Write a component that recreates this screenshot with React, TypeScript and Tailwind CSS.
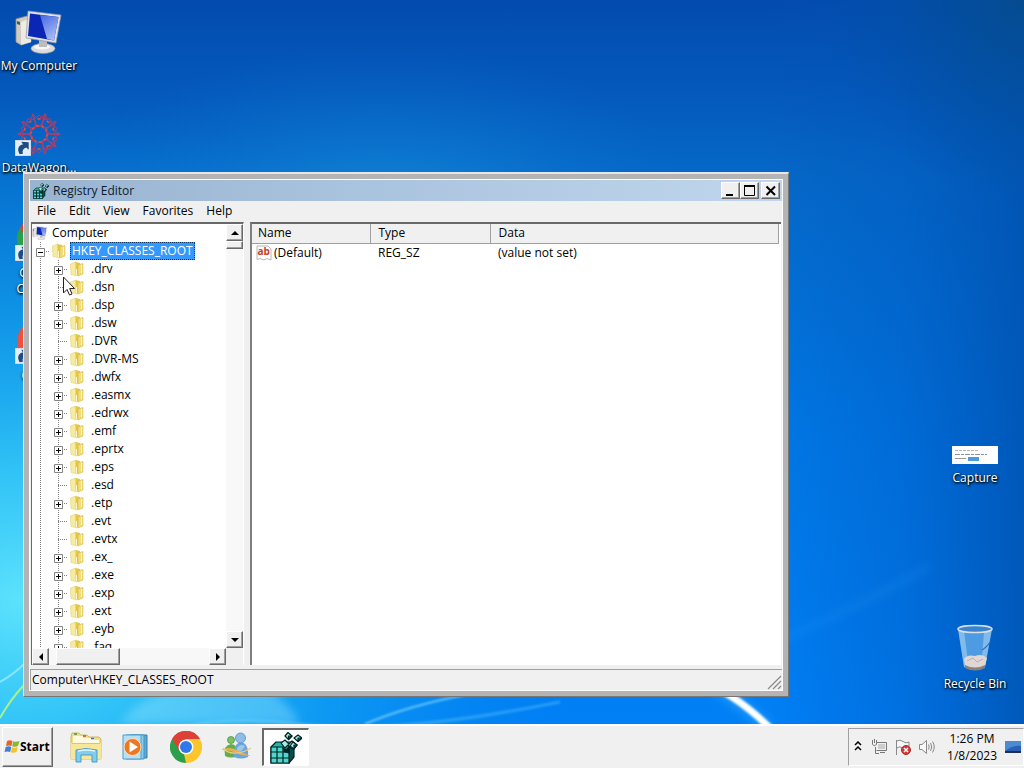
import type { ReactNode } from "react";

type Key = {
    name: string;
    open?: boolean; // has sub keys
}

const keys: Key[] = [
    { name: ".drv", open: true },
    { name: ".dsn" },
    { name: ".dsp", open: true },
    { name: ".dsw", open: true },
    { name: ".DVR" },
    { name: ".DVR-MS", open: true },
    { name: ".dwfx", open: true },
    { name: ".easmx", open: true },
    { name: ".edrwx", open: true },
    { name: ".emf", open: true },
    { name: ".eprtx", open: true },
    { name: ".eps", open: true },
    { name: ".esd" },
    { name: ".etp", open: true },
    { name: ".evt" },
    { name: ".evtx" },
    { name: ".ex_", open: true },
    { name: ".exe", open: true },
    { name: ".exp", open: true },
    { name: ".ext", open: true },
    { name: ".eyb", open: true },
    { name: ".faq", open: true },
];

const raised = "bg-[#f0f0f0] border border-t-white border-l-white border-r-[#696969] border-b-[#696969] shadow-[inset_-1px_-1px_0_#a0a0a0]";

function Wallpaper() {
    return (
        <svg className="absolute inset-0 h-full w-full" viewBox="0 0 1024 724" preserveAspectRatio="none" aria-hidden="true">
            <defs>
                <linearGradient id="sky" x1="0" y1="0" x2="0" y2="1">
                    <stop offset="0" stopColor="#034bae" />
                    <stop offset=".12" stopColor="#0458bb" />
                    <stop offset=".24" stopColor="#0568c8" />
                    <stop offset=".6" stopColor="#0078e6" />
                    <stop offset="1" stopColor="#0080f6" />
                </linearGradient>
                <radialGradient id="glow" gradientUnits="userSpaceOnUse" cx="0" cy="0" r="1" gradientTransform="translate(380 230) scale(330 190)">
                    <stop offset="0" stopColor="#1a9ae0" stopOpacity=".75" />
                    <stop offset="1" stopColor="#0a70cc" stopOpacity="0" />
                </radialGradient>
                <radialGradient id="cyan" gradientUnits="userSpaceOnUse" cx="0" cy="0" r="1" gradientTransform="translate(20 600) scale(560 500)">
                    <stop offset="0" stopColor="#5ce2fc" />
                    <stop offset=".25" stopColor="#38ccf8" stopOpacity=".9" />
                    <stop offset=".6" stopColor="#18b0f0" stopOpacity=".5" />
                    <stop offset="1" stopColor="#0888e8" stopOpacity="0" />
                </radialGradient>
                <linearGradient id="shade" x1="0" y1="0" x2="1" y2="0">
                    <stop offset=".75" stopColor="#0050b4" stopOpacity="0" />
                    <stop offset=".88" stopColor="#0054ba" stopOpacity=".35" />
                    <stop offset="1" stopColor="#0052b0" stopOpacity=".85" />
                </linearGradient>
                <radialGradient id="corner" gradientUnits="userSpaceOnUse" cx="1024" cy="0" r="200">
                    <stop offset="0" stopColor="#064a88" stopOpacity=".8" />
                    <stop offset="1" stopColor="#034c98" stopOpacity="0" />
                </radialGradient>
                <filter id="soft"><feGaussianBlur stdDeviation="1.2" /></filter>
                <filter id="wide" x="-50%" y="-50%" width="200%" height="200%"><feGaussianBlur stdDeviation="5" /></filter>
            </defs>
            <rect width="1024" height="724" fill="url(#sky)" />
            <rect width="1024" height="724" fill="url(#glow)" />
            <rect width="1024" height="724" fill="url(#cyan)" />
            <rect width="1024" height="724" fill="url(#shade)" />
            <rect width="1024" height="724" fill="url(#corner)" />
            <path d="M780 640 Q860 606 930 566" stroke="#2c9cf6" strokeWidth="6" opacity=".25" fill="none" filter="url(#wide)" />
            <path d="M650 655 Q725 685 768 728" stroke="#48b8ff" strokeWidth="12" opacity=".4" fill="none" filter="url(#wide)" />
            <path d="M690 675 Q735 693 770 728" stroke="#fff" strokeWidth="7" fill="none" filter="url(#soft)" />
            <path d="M130 740 Q210 712 300 724 T560 702" stroke="#7fdfff" strokeWidth="3" opacity=".3" fill="none" filter="url(#soft)" />
            <path d="M365 724 Q410 705 470 694" stroke="#a8ecff" strokeWidth="2" opacity=".6" fill="none" filter="url(#soft)" />
            <path d="M120 724 Q135 700 170 690 L270 690 Q295 710 300 724Z" fill="#a8f0ff" opacity=".35" filter="url(#wide)" />
            <path d="M0 718 Q10 700 24 685" stroke="#a5f28a" strokeWidth="2" fill="none" />
            <path d="M0 682 Q14 674 24 664" stroke="#b9f3ff" strokeWidth="2" opacity=".6" fill="none" />
        </svg>
    );
}

function DesktopIcon({ label, place, children }: { label: ReactNode; place: string; children: ReactNode }) {
    return (
        <button type="button" className={"absolute flex w-20 flex-col items-center gap-1 text-white [text-shadow:1px_1px_2px_#000,0_1px_3px_#000] " + place}>
            {children}
            <span className="whitespace-nowrap leading-4">{label}</span>
        </button>
    );
}

function ComputerIcon({ className }: { className: string }) {
    return (
        <svg className={className} viewBox="0 0 48 44" aria-hidden="true">
            <defs>
                <linearGradient id="screen" x1="0" y1="0" x2=".5" y2="1">
                    <stop offset="0" stopColor="#4468e0" />
                    <stop offset="1" stopColor="#a4b8f6" />
                </linearGradient>
            </defs>
            <path d="M1 9 L12 6 L16 8 V32 L6 35 L1 32Z" fill="#cfccc4" stroke="#8f8f8f" strokeWidth=".8" />
            <path d="M6 12 V35 L16 32 V8Z" fill="#eeebe4" />
            <path d="M2 11 L5 12 V15 L2 14Z" fill="#364" />
            <ellipse cx="28" cy="38.500" rx="12" ry="5" fill="#dcdcdc" stroke="#9a9a9a" strokeWidth=".7" />
            <ellipse cx="27" cy="37" rx="8" ry="2.500" fill="#f6f6f6" />
            <path d="M24 28 L32 29 L32 37 H24Z" fill="#bdbdbd" />
            <path d="M13 1 L46 5 L41 33 L11 28Z" fill="#e0e0e6" stroke="#8e96a8" strokeWidth=".7" />
            <path d="M15 3.500 L43.500 7 L39 30.500 L13 26Z" fill="#0b26b4" />
            <path d="M25 5 L43.500 7 L39 30.500 L32 29Z" fill="url(#screen)" />
        </svg>
    );
}

function ShortcutArrow({ className }: { className: string }) {
    return (
        <svg className={className} viewBox="0 0 14 14" aria-hidden="true">
            <path d="M0 0H14V14H0Z" fill="#e4eef8" stroke="#a8b8c8" strokeWidth=".6" />
            <path d="M4 12.500 C1.500 8 3 4.500 7 4 L5.500 1.500 L12 2 L12 8.500 L9.800 6.500 C7 7.500 6 9.500 7 12Z" fill="#1c4c86" />
        </svg>
    );
}

function WagonIcon() {
    const petals = [0, 36, 72, 108, 144, 180, 216, 252, 288, 324];
    return (
        <span className="relative block">
            <svg className="h-11 w-12" viewBox="-24 -22 48 44" aria-hidden="true">
                <g fill="none" stroke="#a83e6c" strokeWidth=".9">
                    {petals.map((a) => (
                        <g key={a} transform={`rotate(${a})`}>
                            <path d="M-7 -20 L0 -15 L7 -20 M-7 -20 L-4 -11 L0 -7 L4 -11 L7 -20" />
                            <path d="M-5 -14 L0 -19 L5 -14 M-3 -7 L3 -10" />
                            <path d="M-1.500 -15H1.500M-3 -8H0" stroke="#ea4a40" strokeWidth="1.500" />
                        </g>
                    ))}
                </g>
            </svg>
            <ShortcutArrow className="absolute bottom-0 left-0 h-4 w-4" />
        </span>
    );
}

function RecycleBin() {
    return (
        <svg className="h-12 w-10" viewBox="0 0 40 48" aria-hidden="true">
            <path d="M3 5 L9 43 Q20 49 30 43 L37 5Z" fill="#5ba6e8" opacity=".85" />
            <path d="M3 5 L9 43 L14 45 L9 7Z M37 5 L30 43 L26 45 L29 8Z" fill="#c6e1f6" opacity=".45" />
            <path d="M27 26 Q31 24 36 17" stroke="#2867b5" strokeWidth="1.200" fill="none" />
            <path d="M9 35 Q12 30 20 32 Q27 29 32 34 L30 42 Q20 47 10 42Z" fill="#ded7d5" />
            <path d="M12 37 L18 34 L22 38 L28 35" stroke="#bdb0ae" fill="none" />
            <path d="M10 41 Q20 46 30 41 L30 44 Q20 49 10 44Z" fill="#8e8078" />
            <ellipse cx="20" cy="5" rx="17" ry="3.500" fill="#3d83cc" stroke="#d9dfe4" strokeWidth="1.500" />
        </svg>
    );
}

function Folder() {
    return (
        <svg className="h-4 w-4 shrink-0" viewBox="0 0 16 16" aria-hidden="true">
            <path d="M1.500 3 L7 1 V14.500 L2 13.500Z" fill="#f6ebA0" stroke="#e0cf80" strokeWidth=".6" />
            <path d="M6.500 1 L11 2 V13 L7 15.500Z" fill="#e2c648" />
            <path d="M9 4 L14 2.500 V13 L9 15Z" fill="#f0dc78" stroke="#d8bd50" strokeWidth=".6" />
            <path d="M7.500 8 V14.500 M12.500 4V12" stroke="#fdf8d0" />
        </svg>
    );
}

/* one 18px step of the tree: dotted guide, with an optional branch */
function Guide({ branch = true }: { branch?: boolean }) {
    return (
        <svg className="block h-[18px] w-[18px] shrink-0" viewBox="0 0 18 18" aria-hidden="true">
            <path d="M8.500 0V18" stroke="#808080" strokeDasharray="1 1" />
            {branch && <path d="M8 9.500H18" stroke="#808080" strokeDasharray="1 1" />}
        </svg>
    );
}

function Toggle({ name, expanded }: { name: string; expanded?: boolean }) {
    return (
        <button type="button" aria-label={(expanded ? "Collapse " : "Expand ") + name} className="block h-[18px] w-[18px] shrink-0">
            <svg className="block h-[18px] w-[18px]" viewBox="0 0 18 18" aria-hidden="true">
                <path d="M8.500 0V18M8 9.500H18" stroke="#808080" strokeDasharray="1 1" />
                <path d="M4.500 6.500H12.500V14.500H4.500Z" fill="#fff" stroke="#848484" />
                <path d={expanded ? "M6 10.500H11" : "M6 10.500H11M8.500 8V13"} stroke="#000" />
            </svg>
        </button>
    );
}

function RegeditIcon({ className }: { className: string }) {
    return (
        <svg className={className} viewBox="0 0 32 32" aria-hidden="true">
            <g stroke="#022" strokeWidth="1.200" strokeLinejoin="round">
                <path d="M1 15 L6 10 H22 L19 14 V31 H1Z" fill="#2ab0a8" />
                <path d="M19 15 L24 11 V25 L19 31Z" fill="#045050" />
                <path d="M1 15H7V20H1ZM7 15H13V20H7ZM1 20H7V26H1ZM7 20H13V26H7ZM13 20H19V26H13ZM1 26H7V31H1ZM7 26H13V31H7ZM13 26H19V31H13Z" fill="#50d6cc" />
                <path d="M11 11 L15 8 L19 12 L15 16Z M18 13 L22 9 L27 13 L22 17Z" fill="#a2eee4" />
                <path d="M13 16 L16 18 L19 15 V21 L15 20Z" fill="#022" />
                <path d="M18 0.500 L22 4 L18.500 7.500 L15 4Z M28 3 L32 6 L28 9.500 L24 6Z M23 10 L27 13 L24 17 L20 14Z" fill="#a2eee4" />
                <path d="M18.500 7.500 L18.500 4 L22 4Z M28 9.500 V6 L32 6Z M24 17 V13 L27 13Z" fill="#148080" />
            </g>
        </svg>
    );
}

function Arrow({ dir, label }: { dir: "up" | "down" | "left" | "right"; label: string }) {
    const shapes = { up: "M4 10H12L8 6Z", down: "M4 6H12L8 10Z", left: "M10 4V12L6 8Z", right: "M6 4V12L10 8Z" };
    return (
        <button type="button" aria-label={label} className={"flex h-[17px] w-[17px] shrink-0 items-center justify-center " + raised}>
            <svg className="h-4 w-4 shrink-0" viewBox="0 0 16 16" aria-hidden="true"><path d={shapes[dir]} /></svg>
        </button>
    );
}

function Tree() {
    return (
        <div className="flex w-[213px] shrink-0 flex-col border-l border-t-2 border-r border-[#696969] border-r-white bg-white">
            <div className="flex min-h-0 flex-1">
                <ul className="min-w-0 flex-1 overflow-hidden leading-[18px]">
                    <li className="flex h-[18px] items-center gap-1">
                        <ComputerIcon className="h-[14px] w-4" />
                        <span>Computer</span>
                    </li>
                    <li className="flex h-[18px] items-center">
                        <Toggle name="HKEY_CLASSES_ROOT" expanded />
                        <span className="flex w-5 pl-px"><Folder /></span>
                        <span className="border border-dotted border-[#cc6600] bg-[#3399ff] px-px leading-4 text-white outline-dotted outline-1 -outline-offset-1 outline-[#10385f]">HKEY_CLASSES_ROOT</span>
                    </li>
                    {keys.map((k) => (
                        <li key={k.name} className="flex h-[18px] items-center">
                            <Guide branch={false} />
                            {k.open ? <Toggle name={k.name} /> : <Guide />}
                            <span className="flex w-[23px] pl-px"><Folder /></span>
                            <span>{k.name}</span>
                        </li>
                    ))}
                </ul>
                <div className="flex w-[17px] flex-col justify-between bg-[#f8f8f8]">
                    <div>
                        <Arrow dir="up" label="Scroll up" />
                        <div className={"h-2 " + raised} />
                    </div>
                    <Arrow dir="down" label="Scroll down" />
                </div>
            </div>
            <div className="flex bg-[#f0f0f0]">
                <div className="flex flex-1 bg-[#f8f8f8]">
                    <Arrow dir="left" label="Scroll left" />
                    <div className="flex flex-1 pl-[7px]"><div className={"w-16 " + raised} /></div>
                    <Arrow dir="right" label="Scroll right" />
                </div>
                <div className="w-[17px]" />
            </div>
        </div>
    );
}

function Values() {
    return (
        <div className="min-w-0 flex-1 border-l-2 border-t-2 border-[#696969] border-l-[#808080] bg-white pr-0.5">
            <table className="w-full table-fixed border-collapse text-left">
                <thead>
                    <tr className="h-[19px] bg-[#f0f0f0] leading-[18px]">
                        <th className="w-[118px] border-b border-r border-[#a0a0a0] py-0 pl-1.5 font-normal">Name</th>
                        <th className="w-[120px] border-b border-r border-[#a0a0a0] py-0 pl-2 font-normal">Type</th>
                        <th className="border-b border-r border-[#a0a0a0] py-0 pl-2 font-normal">Data</th>
                    </tr>
                </thead>
                <tbody>
                    <tr className="h-[18px] leading-[18px]">
                        <td className="p-0">
                            <span className="flex items-center gap-[2px] pl-1">
                                <svg className="h-4 w-4" viewBox="0 0 16 16" aria-hidden="true">
                                    <path d="M1 1 H12 L15 4 V15 L11 13.500 L8 15 L4 13.500 L1 14.500Z" fill="#fff" stroke="#b8b8b8" />
                                    <text x="1.500" y="10" fontSize="10" fontWeight="700" fill="#c3401c" fontFamily="Open Sans, sans-serif">ab</text>
                                </svg>
                                (Default)
                            </span>
                        </td>
                        <td className="p-0 pl-2">REG_SZ</td>
                        <td className="p-0 pl-2">(value not set)</td>
                    </tr>
                </tbody>
            </table>
        </div>
    );
}

function CaptionButton({ label, children }: { label: string; children: ReactNode }) {
    return (
        <button type="button" aria-label={label} className={"flex h-[17px] w-[19px] items-center justify-center " + raised}>
            <svg className="h-3 w-3" viewBox="0 0 12 12" fill="none" stroke="#000" strokeWidth="2" aria-hidden="true">{children}</svg>
        </button>
    );
}

function RegistryEditor() {
    return (
        <section aria-label="Registry Editor" className="absolute left-[23px] top-[172px] flex h-[525px] w-[766px] border border-t-2 border-[#e6e6e6] border-b-[#777] border-r-[#777] bg-[#b4b4b4] p-[5px]">
            <div className="flex min-w-0 flex-1 flex-col border border-white bg-[#f0f0f0]">
                <header className="flex h-[21px] items-center bg-gradient-to-r from-[#99b4d1] to-[#c0d6ee] pl-[3px] pr-0.5">
                    <RegeditIcon className="h-4 w-4" />
                    <h1 className="flex-1 pl-1 leading-5 text-[#0b1c30]">Registry Editor</h1>
                    <CaptionButton label="Minimize"><path d="M1 10H8" /></CaptionButton>
                    <CaptionButton label="Maximize"><path d="M.5 1V10.500H10.500V1" strokeWidth="1" /><path d="M0 1H11" /></CaptionButton>
                    <span className="ml-0.5 flex"><CaptionButton label="Close"><path d="M1.500 1.500L10 10M10 1.500L1.500 10" /></CaptionButton></span>
                </header>
                <nav className="flex h-[21px] items-start gap-[13px] pl-[7px] leading-5">
                    <button type="button">File</button>
                    <button type="button">Edit</button>
                    <button type="button">View</button>
                    <button type="button">Favorites</button>
                    <button type="button">Help</button>
                </nav>
                <main className="flex min-h-0 flex-1 gap-1.5 pl-px pr-px">
                    <Tree />
                    <Values />
                </main>
                <footer className="mt-1 flex h-[21px] items-start justify-between border-l border-t border-[#a0a0a0] pl-px leading-5">
                    <span>Computer\HKEY_CLASSES_ROOT</span>
                    <svg className="h-4 w-4 self-end" viewBox="0 0 16 16" stroke="#8c8c8c" strokeWidth="1.300" aria-hidden="true">
                        <path d="M2 15L15 2M7 15L15 7M12 15L15 12" />
                    </svg>
                </footer>
            </div>
        </section>
    );
}

function Flag() {
    return (
        <svg className="h-4 w-4 shrink-0" viewBox="0 0 16 16" aria-hidden="true">
            <path d="M3 2 Q6 .5 8.500 2 L7.500 7 Q5 5.800 2 7Z" fill="#e8622c" />
            <path d="M9.200 2.300 Q12 3.500 15.500 2 L14 7 Q11 8.300 8.200 7.200Z" fill="#86b832" />
            <path d="M1.700 8 Q5 6.700 7.300 8 L6.200 13 Q3.500 11.800 .5 13Z" fill="#3f82cf" />
            <path d="M8 8.200 Q11 9.300 13.700 8 L12.500 13 Q9.500 14.500 6.900 13.200Z" fill="#f4c32c" />
        </svg>
    );
}

function ExplorerIcon() {
    return (
        <svg className="h-8 w-8" viewBox="0 0 32 32" aria-hidden="true">
            <path d="M2 2H9L11 4H17L19 6H29L31 8V28H1V6Z" fill="#f3de83" stroke="#c9a950" strokeWidth=".8" />
            <path d="M3 5H13V7H24V9H29V12H3Z" fill="#fffadf" />
            <path d="M4 3H7" stroke="#3d9050" strokeWidth="1.500" /><path d="M13 5H16" stroke="#d14b2a" strokeWidth="1.500" /><path d="M21 7.500H24" stroke="#3474c5" strokeWidth="1.500" />
            <path d="M1 12H31V28H1Z" fill="#f7e899" />
            <path d="M2 12.500H30" stroke="#dcc56c" />
            <path d="M6 19 Q16 16 27 19 V31H22V24H11V31H6Z" fill="#83cdec" stroke="#3c97c6" strokeWidth=".9" />
            <path d="M8 20Q16 18 25 20" stroke="#def6ff" strokeWidth="1.500" fill="none" />
        </svg>
    );
}

function PlayerIcon() {
    return (
        <svg className="h-7 w-8" viewBox="0 0 32 28" aria-hidden="true">
            <path d="M10 2H27V25H10Z" fill="#5da8d4" stroke="#397fac" />
            <path d="M6 2H24V26H6Z" fill="#8acbeb" stroke="#4594bf" />
            <path d="M3 2H21V26H3Z" fill="#b6e0f4" stroke="#4f9dca" />
            <circle cx="12.500" cy="14" r="8.500" fill="#ef7722" stroke="#fde0bc" />
            <path d="M9.500 8.500L18 14L9.500 19.500Z" fill="#fff" />
        </svg>
    );
}

function ChromeIcon({ className }: { className: string }) {
    return (
        <svg className={className} viewBox="0 0 32 32" aria-hidden="true">
            <path d="M16 16L2.140 8A16 16 0 0 1 29.860 8Z" fill="#dd4034" />
            <path d="M16 16L29.860 8A16 16 0 0 1 16 32Z" fill="#fbc62c" />
            <path d="M16 16V32A16 16 0 0 1 2.140 8Z" fill="#2c9f4b" />
            <path d="M16 8H29.860L22.500 20Z" fill="#fbc62c" />
            <path d="M22.930 20L16 32L14 23Z" fill="#fbc62c" />
            <path d="M2.140 8L9 20L16 9Z" fill="#2c9f4b" />
            <path d="M2.140 8A16 16 0 0 1 29.860 8H16L9 12.500V20Z" fill="#dd4034" />
            <path d="M2.140 8L9.070 20L6 24L0 17Z" fill="#2c9f4b" />
            <circle cx="16" cy="16" r="7.500" fill="#fff" />
            <circle cx="16" cy="16" r="6" fill="#2f78ea" />
        </svg>
    );
}

function PeopleIcon() {
    return (
        <svg className="h-8 w-8" viewBox="0 0 32 32" aria-hidden="true">
            <path d="M5 25Q3 14 11 13Q18 13 18 25Q11 28 5 25Z" fill="#63ae4b" />
            <circle cx="11" cy="9" r="3.500" fill="#7cc165" stroke="#428d39" strokeWidth=".7" />
            <path d="M14 26Q13 12 21 11.500Q29 12 28 26Q21 29 14 26Z" fill="#6ba5da" />
            <path d="M17 17Q20 12 25 15Q23 20 17 22Z" fill="#b4d6f2" opacity=".7" />
            <circle cx="20.500" cy="7" r="5" fill="#8dbde8" stroke="#497fba" strokeWidth=".7" />
            <path d="M1 19Q9 15 17 19T31 25Q22 25 16 22T1 19Z" fill="#e4b24e" />
            <path d="M3 17Q8 23 17 22Q25 21 31 17" stroke="#eccb7c" strokeWidth="1.200" fill="none" />
        </svg>
    );
}

function Taskbar() {
    return (
        <footer className="flex h-11 shrink-0 items-stretch border-t-2 border-white bg-[#f0f0f0]">
            <button type="button" className={"my-px ml-0.5 flex w-[51px] items-center pl-px text-[12px] font-bold text-black " + raised}>
                <Flag />
                Start
            </button>
            <div className="ml-[17px] flex items-center gap-[18px]">
                <button type="button" aria-label="Windows Explorer"><ExplorerIcon /></button>
                <button type="button" aria-label="Media Player"><PlayerIcon /></button>
                <button type="button" aria-label="Chrome"><ChromeIcon className="h-8 w-8" /></button>
                <button type="button" aria-label="Messenger"><PeopleIcon /></button>
            </div>
            <button type="button" aria-label="Registry Editor" className="my-0.5 ml-[10px] flex w-[47px] items-center justify-center border border-l-2 border-t-2 border-[#696969] border-b-white border-r-white bg-white">
                <RegeditIcon className="h-8 w-8" />
            </button>
            <div className="my-0.5 ml-auto flex items-center border border-[#a0a0a0] border-b-white border-r-white pl-[5px] pr-0.5">
                <button type="button" aria-label="Show hidden icons">
                    <svg className="h-3 w-2" viewBox="0 0 8 12" fill="none" stroke="#000" strokeWidth="1.500" aria-hidden="true"><path d="M1 4L4 1L7 4M1 9L4 6L7 9" /></svg>
                </button>
                <div className="flex gap-2 pl-[9px]">
                    <svg className="h-4 w-4" viewBox="0 0 16 16" fill="none" stroke="#777" aria-hidden="true">
                        <path d="M6 3.500H15.500V11.500H5.500M9 13.500H14M4.500 8V14.500H8" /><path d="M7 5H14V10H7Z" fill="#ccc" stroke="none" /><path d="M1.500 1V5.500Q3 8 5.500 5.500V1M3.500 0V4" />
                    </svg>
                    <svg className="h-4 w-4" viewBox="0 0 16 16" fill="none" stroke="#888" aria-hidden="true">
                        <path d="M1.500 1V16M2 2Q5 0 8 2.500T14 3V9Q10 10 7 8.500T2 9" fill="#f8f8f8" />
                        <circle cx="11" cy="11" r="4.500" fill="#d23a36" stroke="#a82a2a" /><path d="M9 9L13 13M13 9L9 13" stroke="#fff" strokeWidth="1.500" />
                    </svg>
                    <svg className="h-4 w-4" viewBox="0 0 16 16" fill="none" stroke="#888" aria-hidden="true">
                        <path d="M.5 5.500H3L7.500 1.500V14.500L3 10.500H.5Z" fill="#f8f8f8" /><path d="M9.500 5.500Q11 8 9.500 10.500M11.500 4Q14 8 11.500 12M13.500 2.500Q17 8 13.500 13.500" />
                    </svg>
                </div>
                <div className="pl-3 text-center leading-[17px]">
                    <p>1:26 PM</p>
                    <p>1/8/2023</p>
                </div>
                <button type="button" aria-label="Show desktop" className="ml-2 shrink-0">
                    <svg className="h-4 w-4" viewBox="0 0 16 16" aria-hidden="true">
                        <path d="M0 2H16V14H0Z" fill="#2a61b4" /><path d="M0 2H16V7Q8 6 0 12Z" fill="#4c8ad4" /><path d="M0 12H16V14H0Z" fill="#1c3050" />
                    </svg>
                </button>
            </div>
        </footer>
    );
}

export default function App() {
    return (
        <div className="flex h-screen flex-col overflow-hidden font-['Open_Sans','Noto_Sans',sans-serif] text-[12px] text-black">
            <div className="relative min-h-0 flex-1 overflow-hidden">
                <Wallpaper />
                <DesktopIcon label="My Computer" place="left-[-1px] top-[10px]"><ComputerIcon className="h-11 w-12" /></DesktopIcon>
                <DesktopIcon label="DataWagon..." place="left-[-1px] top-[112px]"><WagonIcon /></DesktopIcon>
                <DesktopIcon label={<>Google<br />Chrome</>} place="left-[-1px] top-[217px]">
                    <span className="relative block">
                        <ChromeIcon className="h-11 w-12" />
                        <ShortcutArrow className="absolute bottom-0 left-0 h-4 w-4" />
                    </span>
                </DesktopIcon>
                <DesktopIcon label="Opera" place="left-[-1px] top-[320px]">
                    <span className="relative block">
                        <svg className="h-11 w-12" viewBox="0 0 48 44" aria-hidden="true"><circle cx="24" cy="22" r="22" fill="#f0503c" /></svg>
                        <ShortcutArrow className="absolute bottom-0 left-0 h-4 w-4" />
                    </span>
                </DesktopIcon>
                <DesktopIcon label="Capture" place="right-[9px] top-[446px]">
                    <svg className="mb-0.5 h-[18px] w-[46px]" viewBox="0 0 46 18" aria-hidden="true">
                        <path d="M0 0H46V18H0Z" fill="#fff" />
                        <path d="M3 4.500H26" stroke="#b4b4b4" strokeDasharray="3 1" /><path d="M3 8.500H35" stroke="#8893a0" strokeDasharray="5 1 3 1" /><path d="M3 12.500H14" stroke="#999" /><path d="M16 11H27V15H16Z" fill="#4c9be0" />
                    </svg>
                </DesktopIcon>
                <DesktopIcon label="Recycle Bin" place="right-[9px] top-[624px]"><RecycleBin /></DesktopIcon>
                <RegistryEditor />
                {/* mouse pointer */}
                <svg className="absolute left-[63px] top-[276px] h-5 w-3" viewBox="0 0 12 20" aria-hidden="true">
                    <path d="M.5 1V17L4 13.500L6.500 19L9 18L6.700 12.500H11.500Z" fill="#fff" stroke="#222" />
                </svg>
            </div>
            <Taskbar />
        </div>
    );
}
